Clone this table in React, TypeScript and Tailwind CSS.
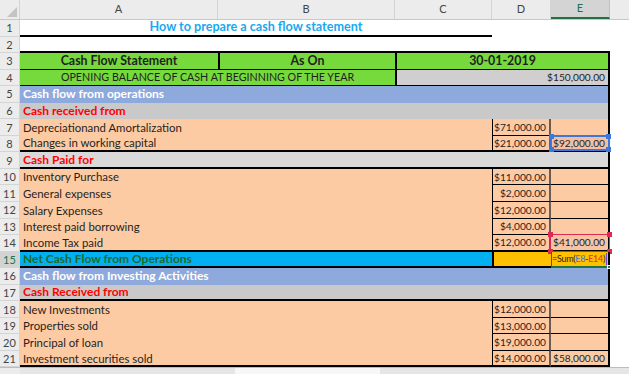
import React from 'react';

const peach = 'bg-[#FDCBA3]';
const num = 'text-[10.2px]';

type Line = { n: number; label: string; d: string; e?: string; last?: boolean };

const operating: Line[] = [
  { n: 7, label: 'Depreciationand Amortalization', d: '$71,000.00' },
  { n: 8, label: 'Changes in working capital', d: '$21,000.00', e: '$92,000.00', last: true },
];

const paid: Line[] = [
  { n: 10, label: 'Inventory Purchase', d: '$11,000.00' },
  { n: 11, label: 'General expenses', d: '$2,000.00' },
  { n: 12, label: 'Salary Expenses', d: '$12,000.00' },
  { n: 13, label: 'Interest paid borrowing', d: '$4,000.00' },
  { n: 14, label: 'Income Tax paid', d: '$12,000.00', e: '$41,000.00', last: true },
];

const investing: Line[] = [
  { n: 18, label: 'New Investments', d: '$12,000.00' },
  { n: 19, label: 'Properties sold', d: '$13,000.00' },
  { n: 20, label: 'Principal of loan', d: '$19,000.00' },
  { n: 21, label: 'Investment securities sold', d: '$14,000.00', e: '$58,000.00', last: true },
];

function RowNum({ n, active }: { n: number; active?: boolean }) {
  return (
    <div
      className={`w-[20px] shrink-0 h-full flex items-center justify-center text-[11px] border-r border-b border-[#d4d4d4] ${
        active ? 'bg-[#d3d3d3] text-[#217346]' : 'bg-[#ececec] text-[#444]'
      }`}
    >
      {n}
    </div>
  );
}

function Row({ n, active, children }: { n: number; active?: boolean; children?: React.ReactNode }) {
  return (
    <div className="flex h-[16.55px] text-[11.4px] leading-none">
      <RowNum n={n} active={active} />
      {children}
    </div>
  );
}

function Handles({ color }: { color: string }) {
  return (
    <>
      <span className={`absolute -left-[3px] -top-[3px] w-[5px] h-[5px] ${color}`} />
      <span className={`absolute -right-[3px] -top-[3px] w-[5px] h-[5px] ${color}`} />
      <span className={`absolute -left-[3px] -bottom-[3px] w-[5px] h-[5px] ${color}`} />
      <span className={`absolute -right-[3px] -bottom-[3px] w-[5px] h-[5px] ${color}`} />
    </>
  );
}

function ItemRow({ line }: { line: Line }) {
  const bottom = line.last ? 'border-b-2 border-b-black' : 'border-b border-b-black';
  const sel8 = line.n === 8;
  const sel14 = line.n === 14;
  return (
    <Row n={line.n}>
      <div className={`w-[472px] ${peach} flex items-center pl-[3px] text-[#1f1f1f] ${line.last ? 'border-b-2 border-black' : ''}`}>
        {line.label}
      </div>
      <div className={`w-[59px] ${peach} ${num} border-l border-l-black border-r-2 border-r-[#6a5c52] ${bottom} flex items-center justify-end pr-[3px] text-[#1f1f1f]`}>
        {line.d}
      </div>
      <div
        className={`relative w-[59px] ${num} border-r-2 border-r-black ${bottom} flex items-center justify-end pr-[3px] text-[#1f1f1f] ${
          sel8 ? 'bg-[#F3C0A6]' : sel14 ? 'bg-[#F7C4A5]' : peach
        }`}
      >
        {line.e}
        {sel8 && (
          <div className="absolute -left-[1px] -top-[1px] -right-[2px] -bottom-[1px] border-2 border-[#3d77dc]">
            <Handles color="bg-[#3d77dc]" />
          </div>
        )}
        {sel14 && (
          <div className="absolute -left-[1px] -top-[1px] -right-[2px] -bottom-[2px] border border-[#dd2a52]">
            <Handles color="bg-[#dd2a52]" />
          </div>
        )}
      </div>
    </Row>
  );
}

function BandRow({ n, text, cls, textCls }: { n: number; text: string; cls: string; textCls: string }) {
  return (
    <Row n={n}>
      <div className={`w-[590px] ${cls} flex items-center pl-[3px] font-bold text-[12px] ${textCls} border-r-2 border-black`}>{text}</div>
    </Row>
  );
}

export default function App() {
  const cols = [
    { l: 'A', w: 'w-[198px]' },
    { l: 'B', w: 'w-[177px]' },
    { l: 'C', w: 'w-[97px]' },
    { l: 'D', w: 'w-[59px]' },
  ];
  return (
    <div className="w-[629px] h-[374px] overflow-hidden bg-white font-['Lato',sans-serif] text-[#1f1f1f]">
      {/* column headers */}
      <div className="flex h-[20px] bg-[#ececec] text-[11px] text-[#444] border-b border-[#c8c8c8]">
        <div className="w-[20px] relative border-r border-[#d4d4d4]">
          <svg className="absolute right-[2px] bottom-[2px]" width="10" height="10" viewBox="0 0 10 10">
            <polygon points="10,0 10,10 0,10" fill="#c4c4c4" />
          </svg>
        </div>
        {cols.map((c) => (
          <div key={c.l} className={`${c.w} flex items-center justify-center border-r border-[#d4d4d4]`}>
            {c.l}
          </div>
        ))}
        <div className="w-[59px] flex items-center justify-center bg-[#d4d4d4] text-[#217346] border-b-2 border-[#217346] border-r border-r-[#c0c0c0]">
          E
        </div>
        <div className="flex-1" />
      </div>

      <Row n={1}>
        <div className="w-[472px] border-b-2 border-black flex items-center justify-center font-bold text-[12.6px] text-[#18A9EE]">
          How to prepare a cash flow statement
        </div>
      </Row>
      <Row n={2}>
        <div className="w-[590px] border-b-2 border-black" />
      </Row>
      <Row n={3}>
        <div className="w-[198px] bg-[#76D93C] border-b border-black flex items-center justify-center font-bold text-[12.4px]">Cash Flow Statement</div>
        <div className="w-[177px] bg-[#76D93C] border-l-2 border-b border-black flex items-center justify-center font-bold text-[12.4px]">As On</div>
        <div className="w-[215px] bg-[#76D93C] border-l-2 border-r-2 border-b border-black flex items-center justify-center font-bold text-[12.4px]">30-01-2019</div>
      </Row>
      <Row n={4}>
        <div className="w-[375px] bg-[#76D93C] border-b border-black flex items-center justify-center text-[10.7px]">
          OPENING BALANCE OF CASH AT BEGINNING OF THE YEAR
        </div>
        <div className={`w-[215px] bg-[#D0CECE] ${num} border-l-2 border-r-2 border-b border-black flex items-center justify-end pr-[3px]`}>
          $150,000.00
        </div>
      </Row>
      <BandRow n={5} text="Cash flow from operations" cls="bg-[#8EA9DB]" textCls="text-white" />
      <BandRow n={6} text="Cash received from" cls="bg-[#C9C9C9]" textCls="text-[#ff0000]" />
      {operating.map((l) => (
        <ItemRow key={l.n} line={l} />
      ))}
      <Row n={9}>
        <div className="w-[590px] bg-[#D9D9D9] flex items-center pl-[3px] font-bold text-[12px] text-[#ff0000] border-r-2 border-b-2 border-black">
          Cash Paid for
        </div>
      </Row>
      {paid.map((l) => (
        <ItemRow key={l.n} line={l} />
      ))}
      <Row n={15} active>
        <div className="w-[472px] bg-[#00B0F0] flex items-center pl-[3px] font-bold text-[12px] text-[#1d6a2c] border-b-2 border-black">
          Net Cash Flow from Operations
        </div>
        <div className="w-[59px] bg-[#FFC000] border-l-2 border-b-2 border-black" />
        <div className="relative w-[59px] bg-[#FFC000] text-[9px] tracking-[-0.3px] flex items-center border-l border-l-[#217346] border-b-2 border-b-[#217346] border-r-2 border-r-black">
          <span className="text-[#1f1f1f]">=Sum(</span>
          <span className="text-[#3d77dc]">E8</span>
          <span className="text-[#1f1f1f]">-</span>
          <span className="text-[#e0302a]">E14</span>
          <span className="text-[#1f1f1f]">)</span>
          <span className="ml-[1px] w-[1px] h-[12px] bg-[#6c4ad6]" />
          <span className="absolute -right-[3px] -bottom-[3px] w-[4px] h-[4px] bg-[#217346] border border-white" />
        </div>
      </Row>
      <BandRow n={16} text="Cash flow from Investing Activities" cls="bg-[#8EA9DB]" textCls="text-white" />
      <Row n={17}>
        <div className="w-[590px] bg-[#C9C9C9] flex items-center pl-[3px] font-bold text-[12px] text-[#ff0000] border-r-2 border-b-2 border-black">
          Cash Received from
        </div>
      </Row>
      {investing.map((l) => (
        <ItemRow key={l.n} line={l} />
      ))}
      {/* sheet bottom / scroll strip */}
      <div className="flex h-[9px] bg-[#e6e6e6] border-t border-[#bdbdbd]">
        <div className="w-[20px] bg-[#ececec]" />
        <div className="ml-[215px] w-[145px] h-full bg-[#f7f7f7]" />
      </div>
    </div>
  );
}
